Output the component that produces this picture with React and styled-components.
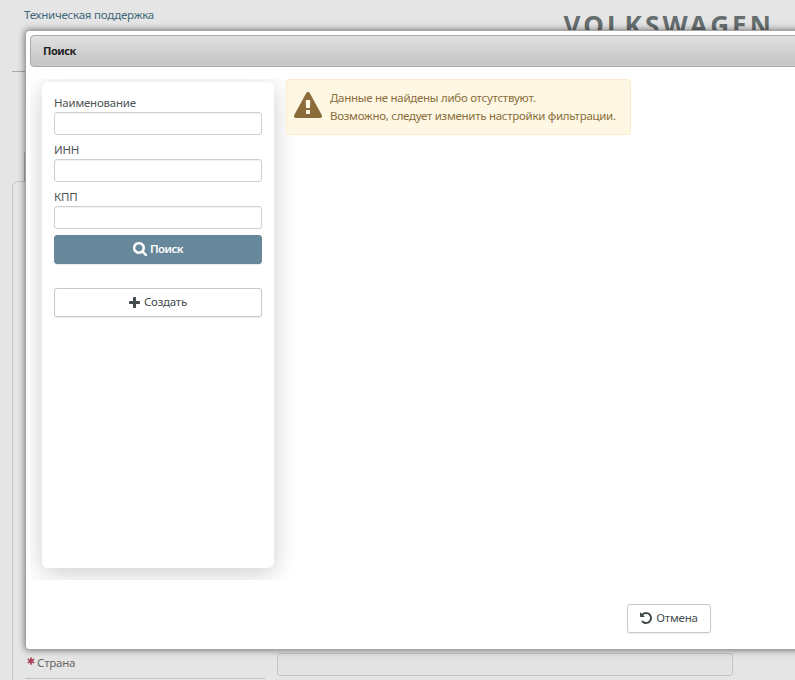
import React from "react";
import styled, { createGlobalStyle } from "styled-components";

const GlobalStyle = createGlobalStyle`
  * { box-sizing: border-box; }
  html, body { margin: 0; height: 100%; overflow: hidden; background: #e5e5e5; }
  body { font: 11.5px/18px "Noto Sans", "Open Sans", sans-serif; color: #4f5557; letter-spacing: -0.23px; }
`;

const Page = styled.div`
  position: relative;
  width: 795px;
  height: 680px;
  overflow: hidden;
`;

const Header = styled.header`
  display: flex;
  justify-content: space-between;
  height: 72px;
  margin-left: 12px;
  padding: 6px 21px 0 12px;
  border-bottom: 1px solid #a9a9a9;
`;

const SupportLink = styled.a`
  color: #41687a;
`;

const Brand = styled.div`
  margin-top: 1px;
  font: 700 26px/36px "Noto Sans", sans-serif;
  letter-spacing: 3.1px;
  color: #666e70;
  white-space: nowrap;
`;

const Tab = styled.div`
  width: 120px;
  height: 30px;
  margin: 79px 0 0 24px;
  border: 1px solid #b0b0b0;
  border-bottom: 0;
  border-radius: 3px 3px 0 0;
`;

const FormPanel = styled.section`
  display: flex;
  flex-direction: column;
  height: 520px;
  margin: 0 -10px 0 12px;
  padding: 471px 0 0 12px;
  border: 1px solid #c3c3c3;
  border-radius: 6px;
`;

const FormRow = styled.div`
  display: flex;
  gap: 12px;
`;

const FormLabel = styled.div`
  display: flex;
  align-items: flex-start;
  gap: 2px;
  width: 240px;
  height: 26px;
  padding: 1px 0 0 2px;
  border-bottom: 1px solid #c3c3c3;
  color: #666;
`;

const CountryInput = styled.input`
  width: 456px;
  height: 23px;
  border: 1px solid #c5c5c5;
  border-radius: 3px;
  background: #e3e3e3;
`;

const Dialog = styled.div`
  position: absolute;
  left: 25px;
  top: 30px;
  width: 800px;
  height: 620px;
  padding: 4px;
  border: 1px solid #a5a5a5;
  border-radius: 4px;
  background: #fff;
  box-shadow: 0 0 7px rgba(0, 0, 0, 0.55);
`;

const TitleBar = styled.div`
  height: 32px;
  padding: 6px 12px;
  border: 1px solid #a8a8a8;
  border-radius: 4px;
  background: linear-gradient(#e1e1e1, #c8c8c8 80%);
  color: #222;
  font-size: 11px;
  font-weight: 700;
  letter-spacing: -0.5px;
`;

const Content = styled.div`
  display: flex;
  align-items: flex-start;
  gap: 12px;
  height: 501px;
  margin-top: 12px;
  padding-left: 12px;
  overflow: hidden;
`;

const SearchCard = styled.form`
  width: 232px;
  height: 486px;
  margin-top: 3px;
  padding: 12px 12px 0;
  border-radius: 6px;
  background: #fff;
  box-shadow: 0 5px 25px rgba(0, 0, 0, 0.2);
`;

const Field = styled.label`
  display: block;
  height: 47px;
`;

const FieldName = styled.span`
  display: block;
  height: 18px;
`;

const TextInput = styled.input`
  display: block;
  width: 100%;
  height: 23px;
  border: 1px solid #ccd0d2;
  border-radius: 3px;
  background: #fff;
  box-shadow: inset 0 1px 1px rgba(0, 0, 0, 0.06);
`;

const Button = styled.button`
  display: flex;
  align-items: center;
  justify-content: center;
  gap: ${(p) => (p.$primary ? 3 : 4)}px;
  width: ${(p) => p.$width || "100%"};
  height: 29px;
  margin: ${(p) => p.$margin || 0};
  padding: 0 0 1px;
  border: 1px solid ${(p) => (p.$primary ? "#67879b" : "#c8c8c8")};
  border-radius: 3px;
  background: ${(p) => (p.$primary ? "#67879b" : "#fff")};
  box-shadow: 0 1px 1px rgba(0, 0, 0, 0.08);
  color: ${(p) => (p.$primary ? "#fff" : "#444c50")};
  font: inherit;
  font-weight: ${(p) => (p.$primary ? 600 : 400)};
  letter-spacing: ${(p) => (p.$primary ? -0.55 : -0.23)}px;
`;

const Alert = styled.div`
  display: flex;
  align-items: flex-start;
  gap: 8px;
  width: 345px;
  height: 56px;
  padding: 9px 7px 0;
  border: 1px solid #faebcc;
  border-radius: 3px;
  background: #fdf7e3;
  color: #8a6d3b;
  letter-spacing: -0.28px;
  white-space: nowrap;
  position: relative;
`;

const Footer = styled.footer`
  margin: 24px 0 0 597px;
`;

const Glyph = styled.svg`
  flex: none;
  display: block;
  margin-top: ${(p) => p.$drop || 0}px;
  fill: currentColor;
`;

const SearchIcon = () => (
  <Glyph width="14" height="14" viewBox="0 128 1664 1664" stroke="currentColor" strokeWidth="50">
    <path d="M1152 832q0-185-131.500-316.500t-316.500-131.500-316.500 131.500-131.500 316.500 131.500 316.500 316.500 131.500 316.500-131.500 131.500-316.500zm512 832q0 52-38 90t-90 38q-54 0-90-38l-343-342q-179 124-399 124-143 0-273.500-55.500t-225-150-150-225-55.500-273.500 55.500-273.500 150-225 225-150 273.500-55.500 273.500 55.500 225 150 150 225 55.500 273.500q0 220-124 399l343 343q37 37 37 90z" />
  </Glyph>
);

const PlusIcon = () => (
  <Glyph width="11" height="11" viewBox="0 192 1408 1408">
    <path d="M1408 800v192q0 40-28 68t-68 28h-416v416q0 40-28 68t-68 28h-192q-40 0-68-28t-28-68v-416h-416q-40 0-68-28t-28-68v-192q0-40 28-68t68-28h416v-416q0-40 28-68t68-28h192q40 0 68 28t28 68v416h416q40 0 68 28t28 68z" />
  </Glyph>
);

const UndoIcon = () => (
  <Glyph width="12" height="12" viewBox="128 128 1536 1536">
    <path d="M1664 896q0 156-61 298t-164 245-245 164-298 61q-172 0-327-72.500t-264-204.500q-7-10-6.500-22.500t8.500-20.500l137-138q10-9 25-9 16 2 23 12 73 95 179 147t225 52q104 0 198.500-40.500t163.500-109.500 109.500-163.500 40.500-198.500-40.500-198.500-109.500-163.500-163.500-109.500-198.500-40.500q-98 0-188 35.500t-160 101.500l137 138q31 30 14 69-17 40-59 40h-448q-26 0-45-19t-19-45v-448q0-42 40-59 39-17 69 14l130 129q107-101 244.500-156.500t284.500-55.500q156 0 298 61t245 164 164 245 61 298z" />
  </Glyph>
);

const WarningIcon = () => (
  <Glyph width="28" height="28" viewBox="0 0 1792 1792" $drop={3}>
    <path d="M1024 1375v-190q0-14-9.500-23.500t-22.500-9.500h-192q-13 0-22.500 9.500t-9.500 23.500v190q0 14 9.500 23.500t22.500 9.500h192q13 0 22.500-9.500t9.500-23.500zm-2-374l18-459q0-12-10-19-13-11-24-11h-220q-11 0-24 11-10 7-10 21l17 457q0 10 10 16.500t24 6.500h185q14 0 23.500-6.500t10.500-16.500zm-14-934l768 1408q35 63-2 126-17 29-46.500 46t-63.500 17h-1536q-34 0-63.500-17t-46.500-46q-37-63-2-126l768-1408q17-31 47-49t65-18 65 18 47 49z" />
  </Glyph>
);

const RequiredIcon = () => (
  <Glyph width="8" height="8" viewBox="0 0 8 8" $drop={3}>
    <path
      d="M4 1V7M1.400 2.500L6.600 5.500M6.600 2.500L1.400 5.500"
      stroke="#a6425a"
      strokeWidth="1.700"
      strokeLinecap="round"
    />
  </Glyph>
);

export default function App() {
  return (
    <>
      <GlobalStyle />
      <Page>
        <Header>
          <SupportLink>Техническая поддержка</SupportLink>
          <Brand>VOLKSWAGEN</Brand>
        </Header>
        <Tab />
        <FormPanel>
          <FormRow>
            <FormLabel>
              <RequiredIcon />
              <span>Страна</span>
            </FormLabel>
            <CountryInput aria-label="Страна" />
          </FormRow>
        </FormPanel>
        <Dialog role="dialog">
          <TitleBar>Поиск</TitleBar>
          <Content>
            <SearchCard>
              <Field>
                <FieldName>Наименование</FieldName>
                <TextInput />
              </Field>
              <Field>
                <FieldName>ИНН</FieldName>
                <TextInput />
              </Field>
              <Field>
                <FieldName>КПП</FieldName>
                <TextInput />
              </Field>
              <Button type="button" $primary>
                <SearchIcon />
                Поиск
              </Button>
              <Button type="button" $margin="24px 0 0">
                <PlusIcon />
                Создать
              </Button>
            </SearchCard>
            <Alert>
              <WarningIcon />
              <div>
                <div>Данные не найдены либо отсутствуют.</div>
                <div>Возможно, следует изменить настройки фильтрации.</div>
              </div>
            </Alert>
          </Content>
          <Footer>
            <Button type="button" $width="84px">
              <UndoIcon />
              Отмена
            </Button>
          </Footer>
        </Dialog>
      </Page>
    </>
  );
}
